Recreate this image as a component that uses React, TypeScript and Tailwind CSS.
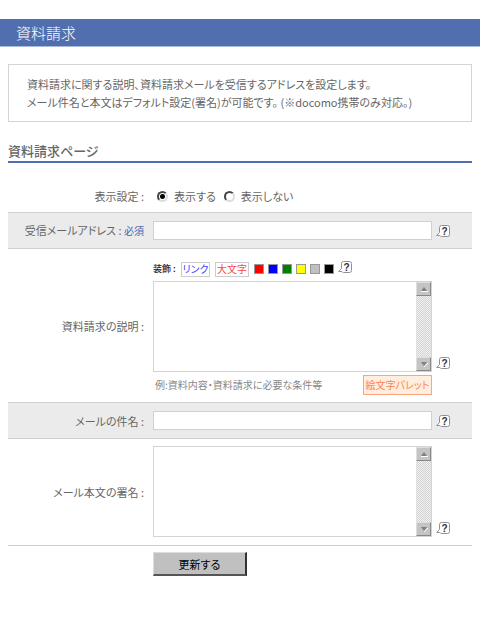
import type { ReactNode } from 'react';

const swatches = [
    { name: '赤', color: 'bg-[#ff0000]' },
    { name: '青', color: 'bg-[#0000ff]' },
    { name: '緑', color: 'bg-[#008000]' },
    { name: '黄', color: 'bg-[#ffff00]' },
    { name: '灰', color: 'bg-[#c0c0c0]' },
    { name: '黒', color: 'bg-[#000000]' },
];

function HelpButton() {
    return (
        <button type="button" aria-label="ヘルプ" className="block h-[14px] w-[14px] shrink-0">
            <svg viewBox="0 0 14 14" width="14" height="14">
                <path
                    d="M5.5 1.5h6a2 2 0 0 1 2 2v7a2 2 0 0 1-2 2h-6a2 2 0 0 1-1.7-1H.7l2.8-3V3.5a2 2 0 0 1 2-2z"
                    fill="#fff"
                    stroke="#909090"
                    strokeLinejoin="round"
                />
                <text
                    x="8.5"
                    y="10.5"
                    textAnchor="middle"
                    fontSize="10"
                    fontWeight="700"
                    fontFamily="Liberation Sans, sans-serif"
                    fill="#333"
                >
                    ?
                </text>
            </svg>
        </button>
    );
}

function ScrollButton({ down = false }: { down?: boolean }) {
    return (
        <button
            type="button"
            tabIndex={-1}
            aria-label={down ? '下へ' : '上へ'}
            className="flex h-[14px] w-full items-center justify-center border border-t-[#dedede] border-r-[#888] border-b-[#888] border-l-[#dedede] bg-[#c4c4c4]"
        >
            <svg viewBox="0 0 8 5" width="8" height="5">
                {down ? (
                    <>
                        <path d="M4 5L8 1" stroke="#fff" />
                        <path d="M1 0h6L4 4z" fill="#808080" />
                    </>
                ) : (
                    <>
                        <path d="M1 4.5h7" stroke="#fff" />
                        <path d="M1 4h6L4 0z" fill="#808080" />
                    </>
                )}
            </svg>
        </button>
    );
}

function TextArea({ id }: { id: string }) {
    return (
        <div className="flex h-[91px] border border-[#d4d4d4] bg-white">
            <textarea id={id} className="h-full min-w-0 flex-1 resize-none overflow-hidden px-1 outline-none" />
            <div className="flex w-[15px] flex-col justify-between bg-[repeating-conic-gradient(#d4d4d4_0_25%,#f0f0f0_0_50%)] bg-[length:2px_2px]">
                <ScrollButton />
                <ScrollButton down />
            </div>
        </div>
    );
}

function Radio({ label, defaultChecked }: { label: string; defaultChecked?: boolean }) {
    return (
        <label className="flex items-center gap-[6px]">
            <input
                type="radio"
                name="display"
                defaultChecked={defaultChecked}
                className="h-[11px] w-[11px] appearance-none rounded-full border-2 border-t-[#444] border-r-[#dcdcdc] border-b-[#dcdcdc] border-l-[#444] bg-white checked:bg-[radial-gradient(circle,#000_2px,#fff_3px)]"
            />
            {label}
        </label>
    );
}

interface RowProps {
    label: ReactNode;
    htmlFor?: string;
    className: string;
    children: ReactNode;
}

function Row({ label, htmlFor, className, children }: RowProps) {
    return (
        <div className={`grid grid-cols-[136px_1fr] items-center gap-[9px] border-b border-[#cfcfcf] ${className}`}>
            {htmlFor ? (
                <label htmlFor={htmlFor} className="text-right">
                    {label}
                </label>
            ) : (
                <span id="display-label" className="text-right">
                    {label}
                </span>
            )}
            {children}
        </div>
    );
}

export default function App() {
    return (
        <div className="min-h-screen bg-white pt-[19px] font-['Noto_Sans_CJK_JP',sans-serif] text-[11px] leading-[18px] text-[#666] [font-feature-settings:'palt']">
            <header className="border-b border-[#a9bbdc] bg-[#516eae] pl-4">
                <h1 className="text-[15px] leading-[27px] font-light text-white">資料請求</h1>
            </header>

            <main className="px-2">
                <p className="mt-[17px] border border-[#d4d4d4] px-[18px] py-[10px]">
                    資料請求に関する説明、資料請求メールを受信するアドレスを設定します。
                    <br />
                    メール件名と本文はデフォルト設定(署名)が可能です。 (※docomo携帯のみ対応。)
                </p>

                <h2 className="mt-[19px] border-b-2 border-[#516eae] text-[13px] leading-5 font-medium">
                    資料請求ページ
                </h2>

                <form onSubmit={(e) => e.preventDefault()}>
                    <Row label="表示設定 :" className="pt-[24px] pb-[7px]">
                        <div role="radiogroup" aria-labelledby="display-label" className="flex gap-2 pl-1">
                            <Radio label="表示する" defaultChecked />
                            <Radio label="表示しない" />
                        </div>
                    </Row>

                    <Row
                        htmlFor="address"
                        className="bg-[#ebebeb] py-2"
                        label={
                            <>
                                受信メールアドレス : <span className="text-[10px] text-[#4466b0]">必須</span>
                            </>
                        }
                    >
                        <div className="flex items-center gap-1 pr-[22px]">
                            <input
                                id="address"
                                type="text"
                                className="h-[19px] min-w-0 flex-1 border border-[#d0d0d0] bg-white px-1 outline-none"
                            />
                            <HelpButton />
                        </div>
                    </Row>

                    <Row label="資料請求の説明 :" htmlFor="description" className="py-2">
                        <div>
                            <div className="flex h-6 items-center text-[9px] leading-3">
                                <span className="w-7 font-medium text-[#222]">装飾 :</span>
                                <button type="button" className="h-[15px] w-[29px] border border-[#ccc] text-[10px] text-[#4444ff]">
                                    リンク
                                </button>
                                <button
                                    type="button"
                                    className="ml-[5px] h-[15px] w-[34px] border border-[#ccc] text-[10px] text-[#ff4444]"
                                >
                                    大文字
                                </button>
                                <div className="ml-[5px] flex gap-1">
                                    {swatches.map((s) => (
                                        <button
                                            key={s.name}
                                            type="button"
                                            aria-label={s.name}
                                            className={`h-[10px] w-[10px] border border-[#999] ${s.color}`}
                                        />
                                    ))}
                                </div>
                                <div className="ml-1 pb-1">
                                    <HelpButton />
                                </div>
                            </div>
                            <div className="flex items-end gap-1 pr-[22px]">
                                <div className="min-w-0 flex-1">
                                    <TextArea id="description" />
                                </div>
                                <div className="pb-[2px]">
                                    <HelpButton />
                                </div>
                            </div>
                            <div className="mt-1 mr-[40px] flex h-[18px] items-center justify-between">
                                <span className="pl-[2px] text-[10px] text-[#888]">例:資料内容・資料請求に必要な条件等</span>
                                <button
                                    type="button"
                                    className="h-5 w-[69px] border border-[#ffa57e] bg-[#ffeedd] text-[10px] text-[#ff8050]"
                                >
                                    絵文字パレット
                                </button>
                            </div>
                        </div>
                    </Row>

                    <Row label="メールの件名 :" htmlFor="subject" className="bg-[#ebebeb] py-2">
                        <div className="flex items-center gap-1 pr-[22px]">
                            <input
                                id="subject"
                                type="text"
                                className="h-[19px] min-w-0 flex-1 border border-[#d0d0d0] bg-white px-1 outline-none"
                            />
                            <HelpButton />
                        </div>
                    </Row>

                    <Row label="メール本文の署名 :" htmlFor="signature" className="pt-[7px] pb-2">
                        <div className="flex items-end gap-1 pr-[22px]">
                            <div className="min-w-0 flex-1">
                                <TextArea id="signature" />
                            </div>
                            <div className="pb-[2px]">
                                <HelpButton />
                            </div>
                        </div>
                    </Row>

                    <button
                        type="submit"
                        className="mt-[6px] ml-[145px] block h-6 w-[94px] border border-t-[#ddd] border-r-2 border-r-[#333] border-b-2 border-b-[#555] border-l-[#ddd] bg-[#c0c0c0] text-black"
                    >
                        更新する
                    </button>
                </form>
            </main>
        </div>
    );
}
